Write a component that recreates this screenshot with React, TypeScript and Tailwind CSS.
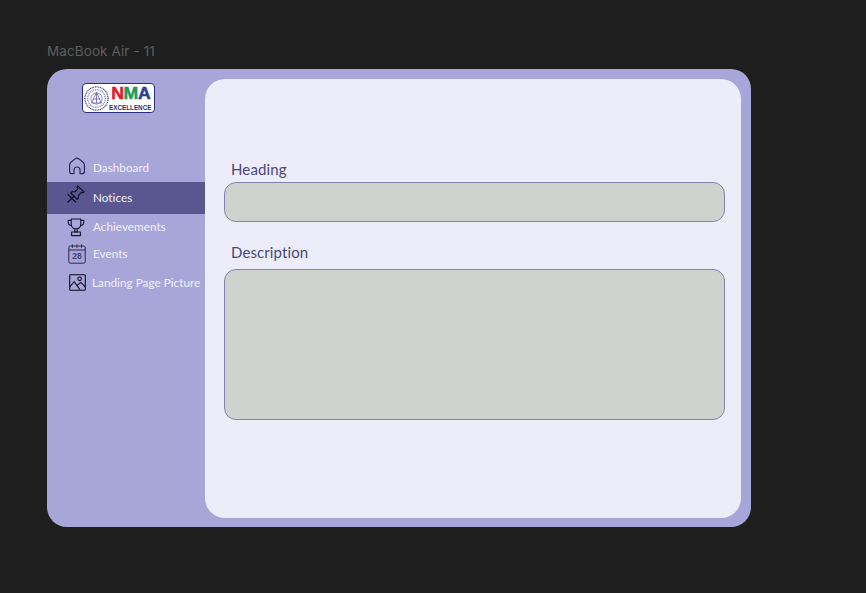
import React from "react";

function HomeIcon() {
  return (
    <svg width="18" height="18" viewBox="0 0 18 18" fill="none" stroke="#2a2560" strokeWidth="1.2" strokeLinejoin="round">
      <path d="M1.6 7.8 C1.6 6.6 2.2 6 3 5.2 L7 1.9 C8.2 1 9.8 1 11 1.9 L15 5.2 C15.8 6 16.4 6.6 16.4 7.8 V14.4 C16.4 15.8 15.5 16.6 14.2 16.6 H12 V13 C12 11.2 10.8 10 9 10 C7.2 10 6 11.2 6 13 V16.6 H3.8 C2.5 16.6 1.6 15.8 1.6 14.4 Z" />
    </svg>
  );
}
function PinIcon() {
  return (
    <svg width="18" height="18" viewBox="0 0 18 18" fill="none" stroke="#0c0a20" strokeWidth="1.1" strokeLinejoin="round" strokeLinecap="round">
      <path d="M10.6 0.9 L17 6.9 L15.8 7.9 L14.6 7.2 L11.4 10.3 L11.4 13.2 L10.2 14.4 L3.8 8 L5 6.8 L7.9 6.8 L11.1 3.6 L10 2.1 Z" />
      <path d="M7 11.2 L1 17" />
      <path d="M1 9.5 L8.6 17" />
    </svg>
  );
}
function TrophyIcon() {
  return (
    <svg width="18" height="19" viewBox="0 0 18 19" fill="none" stroke="#16132e" strokeWidth="1.1" strokeLinejoin="round">
      <path d="M4.2 1 H13.8 V6 C13.8 9 11.8 10.8 9 10.8 C6.2 10.8 4.2 9 4.2 6 Z" />
      <path d="M4.2 2.4 H1.2 V4 C1.2 6 2.6 7.4 4.8 7.6" />
      <path d="M13.8 2.4 H16.8 V4 C16.8 6 15.4 7.4 13.2 7.6" />
      <path d="M7.8 10.8 V14 H10.2 V10.8" />
      <path d="M4.6 14 H13.4 V17.6 H4.6 Z" />
    </svg>
  );
}
function CalendarIcon() {
  return (
    <svg width="18" height="20" viewBox="0 0 18 20" fill="none" stroke="#2d2a4e" strokeWidth="1">
      <rect x="0.8" y="2" width="16.4" height="17.2" rx="1.6" />
      <path d="M0.8 6 H17.2" />
      <path d="M4.4 0.4 V3.8 M9 0.4 V3.8 M13.6 0.4 V3.8" />
      <text x="9" y="15.4" textAnchor="middle" fontSize="8.5" fontWeight="700" fontFamily="Liberation Sans, sans-serif" fill="#45426b" stroke="none">28</text>
    </svg>
  );
}
function PictureIcon() {
  return (
    <svg width="17" height="17" viewBox="0 0 17 17" fill="none" stroke="#0d0b1f" strokeWidth="1.1" strokeLinejoin="round">
      <rect x="0.7" y="0.7" width="15.6" height="15.6" rx="0.8" />
      <circle cx="10.6" cy="4.8" r="1.8" />
      <path d="M0.7 13 L5.2 7.6 L11 15.8" />
      <path d="M8 11.6 L11.8 8.4 L16.3 12.8" />
    </svg>
  );
}
function Emblem() {
  return (
    <svg className="shrink-0" width="25" height="25" viewBox="0 0 25 25" fill="none" stroke="#5d5fa6">
      <circle cx="12.5" cy="12.5" r="11.6" strokeWidth="1.2" strokeDasharray="1 0.7" stroke="#34377f" />
      <circle cx="12.5" cy="12.5" r="8.8" strokeWidth="1.6" strokeDasharray="1 0.8" stroke="#8d8fc0" />
      <circle cx="12.5" cy="12.5" r="5.6" strokeWidth="0.7" />
      <path d="M12.5 6.5 L17.5 17 H7.5 Z M9 13 H16 M12.5 6.5 V17" strokeWidth="0.8" />
    </svg>
  );
}

function NavItem({ icon, label, className, labelClass }: { icon: React.ReactNode; label: string; className: string; labelClass: string }) {
  return (
    <div className={`flex items-center ${className}`}>
      <span className="flex w-[18px] shrink-0 justify-center">{icon}</span>
      <span className={`whitespace-nowrap text-[11.7px] leading-none tracking-[0.05px] text-[#f1f0fa] ${labelClass}`}>{label}</span>
    </div>
  );
}

export default function App() {
  return (
    <div className="h-[593px] w-[866px] overflow-hidden bg-[#1e1e1e] pl-[47px] pt-[44px] font-['Lato',sans-serif]">
      <div className="h-[15px] text-[13.5px] leading-[15px] tracking-[0.1px] text-[#5e5e5e] font-['Inter',sans-serif]">MacBook Air - 11</div>
      <div className="mt-[10px] flex h-[458px] w-[704px] rounded-[20px] bg-[#a8a6d9]">
        <aside className="w-[158px] shrink-0">
          <div className="ml-[35px] mt-[14px] flex h-[30px] w-[73px] items-center rounded-[4px] border-[1.5px] border-[#2c2f78] bg-white pl-[1px]">
            <Emblem />
            <div className="ml-[1px] flex w-[41px] shrink-0 flex-col items-center">
              <span className="h-[18px] origin-center scale-x-[1.1] whitespace-nowrap text-[16px] font-bold leading-[18px] tracking-[-0.3px] [-webkit-text-stroke:0.5px_currentColor] font-['Liberation_Sans',sans-serif]">
                <span className="text-[#d8202f]">N</span>
                <span className="text-[#1f9a55]">M</span>
                <span className="text-[#2d3f90]">A</span>
              </span>
              <span className="h-[9px] origin-center scale-x-[0.84] whitespace-nowrap text-[7.5px] font-bold leading-[9px] text-[#2c2f78] font-['Liberation_Sans',sans-serif]">EXCELLENCE</span>
            </div>
          </div>
          <nav className="mt-[43px] flex flex-col">
            <NavItem icon={<HomeIcon />} label="Dashboard" className="h-[26px] pb-[6px] pl-[21px]" labelClass="ml-[7px] pt-[3px]" />
            <NavItem icon={<PinIcon />} label="Notices" className="h-[32px] bg-[#5a5790] pb-[8px] pl-[20px]" labelClass="ml-[8px] pt-[7px]" />
            <NavItem icon={<TrophyIcon />} label="Achievements" className="h-[26px] pl-[20px]" labelClass="ml-[8px]" />
            <NavItem icon={<CalendarIcon />} label="Events" className="h-[28px] pl-[21px]" labelClass="ml-[7px]" />
            <NavItem icon={<PictureIcon />} label="Landing Page Picture" className="h-[28px] pl-[21px]" labelClass="ml-[6px] pt-[2px]" />
          </nav>
        </aside>
        <main className="mt-[10px] h-[439px] w-[536px] rounded-[20px] bg-[#ecedf8] pl-[19px] pr-[16px] pt-[80px]">
          <label className="ml-[7px] block h-[23px] text-[15px] leading-[20px] tracking-[0.15px] text-[#4a4878]">Heading</label>
          <div className="h-[40px] rounded-[12px] border border-[#8583ad] bg-[#d0d2ce]" />
          <label className="ml-[7px] mt-[18px] block h-[29px] text-[15px] leading-[24px] tracking-[0.1px] text-[#4a4878]">Description</label>
          <div className="h-[151px] rounded-[12px] border border-[#8583ad] bg-[#d0d2ce]" />
        </main>
      </div>
    </div>
  );
}
